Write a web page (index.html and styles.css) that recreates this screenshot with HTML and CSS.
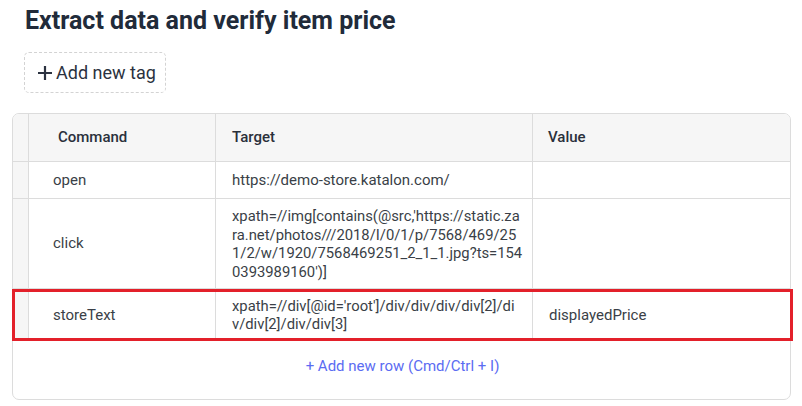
FILE: index.html
```html
<!DOCTYPE html>
<html>
<head>
<meta charset="utf-8">
<link rel="stylesheet" href="styles.css">
</head>
<body>
<div class="page">
  <h1 class="title">Extract data and verify item price</h1>
  <button class="tag-btn"><svg class="plus" viewBox="0 0 14 14" width="14" height="14"><path d="M7 0v14M0 7h14" stroke="currentColor" stroke-width="2.2"/></svg><span>Add new tag</span></button>
  <div class="table">
    <div class="row head">
      <div class="gutter"></div>
      <div class="cell cmd">Command</div>
      <div class="cell">Target</div>
      <div class="cell last">Value</div>
    </div>
    <div class="row r-open">
      <div class="gutter"></div>
      <div class="cell cmd">open</div>
      <div class="cell">https://demo-store.katalon.com/</div>
      <div class="cell last"></div>
    </div>
    <div class="row r-click">
      <div class="gutter"></div>
      <div class="cell cmd">click</div>
      <div class="cell wrap"><span>xpath=//img[contains(@src,'https://static.za<br>ra.net/photos///2018/I/0/1/p/7568/469/25<br>1/2/w/1920/7568469251_2_1_1.jpg?ts=154<br>0393989160')]</span></div>
      <div class="cell last"></div>
    </div>
    <div class="row r-store">
      <div class="gutter"></div>
      <div class="cell cmd">storeText</div>
      <div class="cell wrap"><span>xpath=//div[@id='root']/div/div/div/div[2]/di<br>v/div[2]/div/div[3]</span></div>
      <div class="cell last">displayedPrice</div>
      <div class="highlight"></div>
    </div>
    <div class="add-row">+ Add new row (Cmd/Ctrl + I)</div>
  </div>
</div>
</body>
</html>
```
FILE: styles.css
```css
* { box-sizing: border-box; }
html, body { margin: 0; padding: 0; background: #fff; }
body { font-family: Roboto, "Noto Sans", sans-serif; color: #333a44; }
.page { padding: 7px 12px 0 12px; width: 802px; }
.title {
  margin: 0 0 0 13px;
  font-size: 25px;
  font-weight: 700;
  color: #212b3a;
  line-height: 28px;
}
.tag-btn {
  margin: 17px 0 0 12px;
  width: 142px;
  height: 41px;
  border: 1px dashed #d3d3d3;
  border-radius: 5px;
  background: #fff;
  font-family: Roboto, sans-serif;
  font-size: 18px;
  color: #2b3240;
  display: flex;
  align-items: center;
  padding: 0 0 0 13px;
  gap: 4px;
  cursor: pointer;
}
.plus { display: block; margin-top: 0; }
.table {
  margin-top: 20px;
  width: 779px;
  height: 287px;
  border: 1px solid #dcdcdc;
  border-radius: 7px;
  position: relative;
}
.row {
  display: grid;
  grid-template-columns: 16px 187px 317px 1fr;
  border-bottom: 1px solid #dcdcdc;
  font-size: 15px;
  line-height: 18.5px;
}
.gutter { background: #f6f6f6; border-right: 1px solid #dcdcdc; }
.cell {
  border-right: 1px solid #dcdcdc;
  padding: 0 16px;
  display: flex;
  align-items: center;
  color: #3a3f47;
}
.cell.last { border-right: none; }
.cell.cmd { padding-left: 24px; }
.head { height: 48px; }
.head .gutter { border-top-left-radius: 6px; }
.head .cell { font-weight: 500; color: #2a303b; background: #f6f6f6; }
.head .cell.last { border-top-right-radius: 6px; padding-left: 15px; }
.head .cell.cmd { padding-left: 29px; }
.r-open { height: 37px; }
.r-click { height: 90px; }
.r-store { height: 52px; border-bottom: none; position: relative; }
.wrap { white-space: nowrap; padding-right: 4px; font-size: 14.8px; }
.r-click .wrap { padding-top: 1px; }
.highlight {
  position: absolute;
  left: -1px;
  top: 0;
  width: 781px;
  height: 52px;
  border: 3px solid #e3202a;
}
.add-row {
  height: 58px;
  display: flex;
  align-items: center;
  justify-content: center;
  font-size: 15px;
  color: #5b6cf2;
  padding-bottom: 9px;
  padding-left: 2px;
}
```
